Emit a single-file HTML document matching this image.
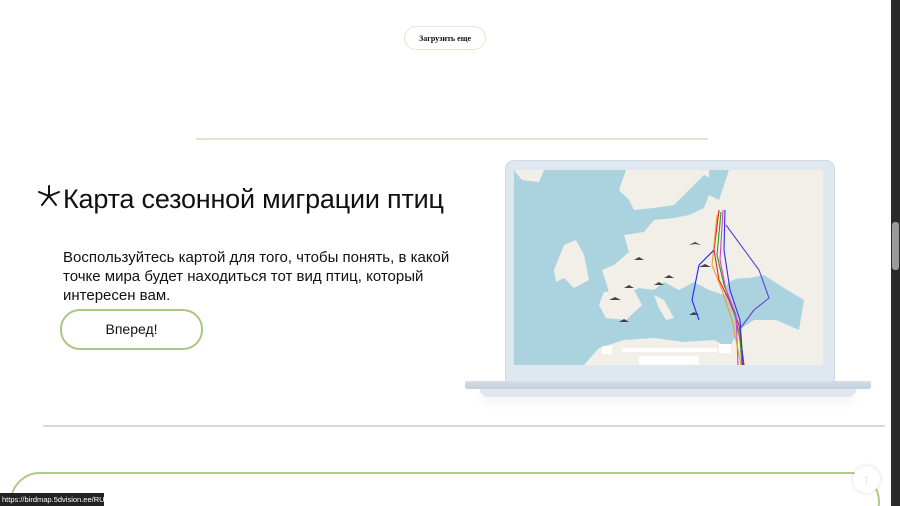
<!DOCTYPE html>
<html style="overflow:hidden;height:506px"><head><meta charset="utf-8"><style>
html,body{margin:0;padding:0}
body{width:900px;height:506px;overflow:hidden;background:#fff;font-family:"Liberation Sans",sans-serif}
#w{position:relative;width:900px;height:506px;overflow:hidden}
.a{position:absolute}
</style></head><body><div id="w">
<div class="a" style="left:404px;top:26px;width:80px;height:22px;border:1.5px solid #e3e9cc;border-radius:13px;font:bold 8px 'Liberation Serif',serif;text-align:center;line-height:23px;color:#111">Загрузить еще</div>
<div class="a" style="left:196px;top:138px;width:512px;height:2px;background:#dfe6cc"></div>
<svg class="a" style="left:37px;top:184px" width="24" height="24" viewBox="0 0 24 24"><g stroke="#111" stroke-width="2" fill="none" stroke-linecap="round"><path d="M12 2 L12 12 M2 8 L12 12 L22 8 M12 12 L5 21 M12 12 L19 21"/></g></svg>
<div class="a" style="left:63px;top:184px;font-size:27px;color:#111;letter-spacing:-0.2px">Карта сезонной миграции птиц</div>
<div class="a" style="left:63px;top:248px;font-size:15px;line-height:19px;color:#111;width:400px">Воспользуйтесь картой для того, чтобы понять, в какой точке мира будет находиться тот вид птиц, который интересен вам.</div>
<div class="a" style="left:60px;top:309px;width:139px;height:37px;border:2px solid #a9c77f;border-radius:20px;text-align:center;line-height:37px;font-size:14px;color:#111">Вперед!</div>
<div class="a" style="left:505px;top:160px;width:328px;height:226px;background:#dfe7f0;border-radius:9px;border:1px solid #d0dae6"></div>
<svg class="a" style="left:514px;top:170px" width="309" height="195" viewBox="0 0 309 195">
<rect width="309" height="195" fill="#aad3df"/>
<path d="M112 0 L309 0 L309 195 L70 195 L85 178 L110 170 L140 168 L170 172 L200 170 L215 178 L225 160 L240 150 L262 150 L285 160 L290 130 L270 118 L250 105 L225 110 L210 125 L195 120 L180 112 L165 120 L150 112 L140 120 L125 118 L110 125 L95 122 L88 100 L100 95 L115 82 L110 65 L130 62 L140 50 L160 48 L175 45 L190 38 L195 25 L200 10 L190 5 L175 20 L160 35 L140 38 L120 40 L115 30 L105 20 Z" fill="#f2efe9"/>
<path d="M50 75 L62 70 L70 85 L75 110 L60 118 L50 108 L42 112 L40 100Z" fill="#f2efe9"/>
<path d="M90 122 L120 120 L128 135 L112 150 L92 148 L85 135Z" fill="#f2efe9"/>
<path d="M140 125 L150 130 L160 148 L152 150 L145 138Z" fill="#f2efe9"/>
<path d="M0 0 L30 0 L25 12 L8 10Z" fill="#f2efe9"/>
<path d="M195 0 L215 0 L205 30 L195 25Z" fill="#aad3df"/>
<ellipse cx="230" cy="118" rx="18" ry="10" fill="#aad3df"/>
<g fill="#444"><path d="M175 75 l6 -3 l6 3 l-6 -1z M150 108 l5 -3 l5 3z M95 130 l6 -3 l6 3z M110 118 l5 -3 l5 3z M140 115 l5 -3 l5 3z M120 90 l5 -3 l5 3z M185 97 l6 -3 l6 3z M175 145 l5 -3 l5 3z M105 152 l5 -3 l5 3z"/></g>
<g fill="none" stroke-width="1.1">
<path d="M205 40 L200 80 L205 110 L215 130 L225 155 L230 195" stroke="#e02020"/>
<path d="M207 42 L203 85 L210 115 L220 140 L226 170 L228 195" stroke="#20a020"/>
<path d="M209 40 L206 90 L212 120 L222 145 L224 195" stroke="#e040c0"/>
<path d="M203 45 L198 95 L208 120 L218 150 L227 195" stroke="#f0a020"/>
<path d="M211 40 L210 80 L216 120 L226 150 L229 195" stroke="#3030e0"/>
<path d="M212 55 L245 100 L255 128 L240 140 L225 160" stroke="#6040d0"/>
<path d="M200 80 L185 95 L178 130 L185 150" stroke="#2020ff"/>
</g>
<rect x="108" y="178" width="95" height="4" fill="#fff" opacity=".9"/>
<rect x="88" y="176" width="10" height="8" fill="#fff"/>
<rect x="205" y="174" width="12" height="9" fill="#fff"/>
<rect x="125" y="186" width="60" height="9" fill="#fff" opacity=".85"/>
</svg>
<div class="a" style="left:465px;top:381px;width:406px;height:8px;background:linear-gradient(#d4dde9,#c3cfde);border-radius:2px"></div>
<div class="a" style="left:480px;top:389px;width:376px;height:8px;background:#dfe6ef;border-radius:0 0 60px 60px;box-shadow:0 6px 10px rgba(0,0,0,.06)"></div>
<div class="a" style="left:43px;top:425px;width:842px;height:2px;background:#d8d8d8"></div>
<div class="a" style="left:10px;top:472px;width:870px;height:60px;border:2.5px solid #afcb86;border-radius:40px;box-sizing:border-box"></div>
<div class="a" style="left:853px;top:466px;width:27px;height:27px;border-radius:50%;background:#fff;box-shadow:0 0 4px rgba(0,0,0,.15);color:#ddd;text-align:center;line-height:27px;font-size:14px">↑</div>
<div class="a" style="left:0;top:493px;width:102px;height:13px;background:#222;color:#fff;font-size:7.5px;line-height:13px;padding-left:2px;white-space:nowrap;overflow:hidden">https://birdmap.5dvision.ee/RU</div>
<div class="a" style="left:891px;top:0;width:9px;height:506px;background:#2b2b2b"></div>
<div class="a" style="left:892px;top:222px;width:7px;height:48px;background:#9a9a9a;border-radius:3px"></div>
</div></body></html>
